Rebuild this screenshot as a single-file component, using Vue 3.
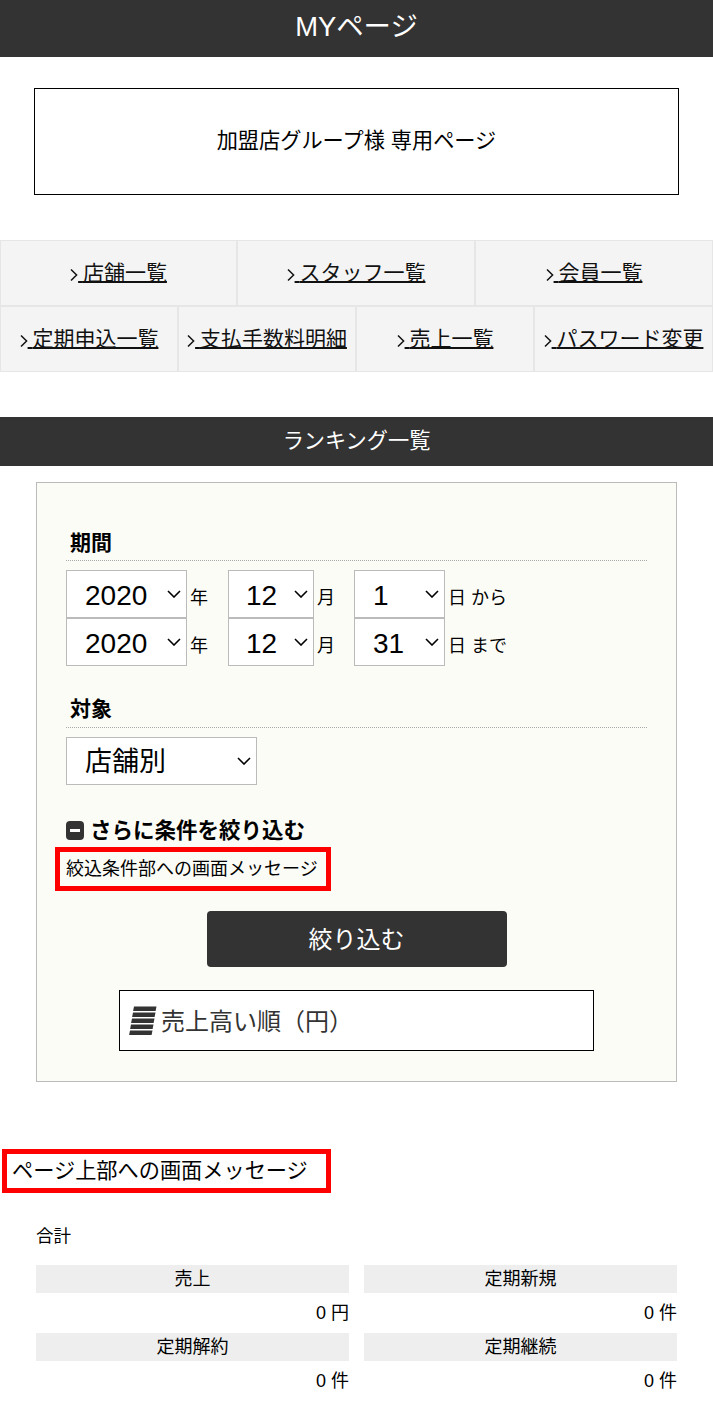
<script setup>
const row1 = ['店舗一覧', 'スタッフ一覧', '会員一覧']
const row2 = ['定期申込一覧', '支払手数料明細', '売上一覧', 'パスワード変更']
const dates = [
  { y: '2020', m: '12', d: '1', end: '日 から' },
  { y: '2020', m: '12', d: '31', end: '日 まで' },
]
const stats = [
  { label: '売上', value: '0 円' },
  { label: '定期新規', value: '0 件' },
  { label: '定期解約', value: '0 件' },
  { label: '定期継続', value: '0 件' },
]
</script>

<template>
  <div class="page">
    <header class="top">MYページ</header>
    <div class="group">加盟店グループ様 専用ページ</div>

    <nav class="nav">
      <div class="nav-row r3">
        <a v-for="n in row1" :key="n" class="nav-item">
          <svg class="gt" width="8" height="14" viewBox="0 0 8 14"><path d="M1 1.5L6.6 7L1 12.5" fill="none" stroke="#111" stroke-width="1.5"/></svg><span class="lnk"><span class="sp">&nbsp;</span>{{ n }}</span>
        </a>
      </div>
      <div class="nav-row r4">
        <a v-for="n in row2" :key="n" class="nav-item">
          <svg class="gt" width="8" height="14" viewBox="0 0 8 14"><path d="M1 1.5L6.6 7L1 12.5" fill="none" stroke="#111" stroke-width="1.5"/></svg><span class="lnk"><span class="sp">&nbsp;</span>{{ n }}</span>
        </a>
      </div>
    </nav>

    <h2 class="section">ランキング一覧</h2>

    <section class="filter">
      <h3 class="flabel">期間</h3>
      <div v-for="(r, i) in dates" :key="i" class="date-row">
        <select class="sel sel-y"><option>{{ r.y }}</option></select>
        <span class="unit u-y">年</span>
        <select class="sel sel-m"><option>{{ r.m }}</option></select>
        <span class="unit u-m">月</span>
        <select class="sel sel-d"><option>{{ r.d }}</option></select>
        <span class="unit">{{ r.end }}</span>
      </div>

      <h3 class="flabel second">対象</h3>
      <select class="sel sel-t"><option>店舗別</option></select>

      <div class="more">
        <span class="minus"><i></i></span><span class="more-text">さらに条件を絞り込む</span>
      </div>
      <div class="msg msg-small">絞込条件部への画面メッセージ</div>

      <button class="go">絞り込む</button>

      <div class="sort">
        <svg class="sort-ico" width="28" height="30" viewBox="0 0 28 30">
          <path d="M5 .5H27.5L26.6 5H4.1ZM4 6.5H26.5L25.6 11H3.1ZM3 12.5H25.5L24.6 17H2.1ZM2 18.5H24.5L23.6 23H1.1ZM1 24.5H23.5L22.6 29H.1Z" fill="#333"/>
        </svg>
        <span class="sort-text">売上高い順（円）</span>
      </div>
    </section>

    <div class="msg msg-large">ページ上部への画面メッセージ</div>

    <section class="totals">
      <div class="totals-title">合計</div>
      <div class="stats">
        <div v-for="s in stats" :key="s.label" class="stat">
          <div class="stat-label">{{ s.label }}</div>
          <div class="stat-value">{{ s.value }}</div>
        </div>
      </div>
    </section>
  </div>
</template>

<style>
html, body { margin: 0; background: #fff; }
</style>

<style scoped>
.page {
  width: 713px;
  height: 1422px;
  overflow: hidden;
  font-family: "Liberation Sans", "Noto Sans CJK JP", sans-serif;
  color: #000;
  text-spacing-trim: space-all;
}
.top {
  height: 57px;
  background: #333;
  color: #fff;
  font-size: 27.4px;
  line-height: 54px;
  text-align: center;
}
.group {
  margin: 31px 34px 0;
  height: 107px;
  box-sizing: border-box;
  border: 1px solid #000;
  font-size: 21.2px;
  line-height: 103px;
  text-align: center;
}
.nav { margin-top: 45px; }
.nav-row { display: grid; grid-template-rows: 66px; height: 66px; }
.r3 { grid-template-columns: 237px 238px 238px; }
.r4 { grid-template-columns: 178px 178px 178px 179px; }
.nav-item {
  box-sizing: border-box;
  height: 66px;
  overflow: hidden;
  border: 1px solid #e6e6e6;
  background: #f4f4f4;
  font-size: 21px;
  line-height: 63px;
  text-align: center;
  white-space: nowrap;
  color: #111;
}
.gt { vertical-align: -2px; }
.lnk { text-decoration: underline; text-decoration-thickness: 2px; }
.sp { letter-spacing: -1px; }
.section {
  margin: 45px 0 0;
  height: 49px;
  background: #333;
  color: #fff;
  font-size: 21.2px;
  font-weight: 400;
  line-height: 48px;
  text-align: center;
}
.filter {
  margin: 16px 36px 0;
  height: 600px;
  box-sizing: border-box;
  border: 1px solid #bbb;
  background: #fcfcf7;
  padding: 0 29px;
}
.flabel {
  margin: 46px 0 0;
  padding: 0 0 4px 4px;
  height: 32px;
  box-sizing: border-box;
  border-bottom: 1px dotted #aaa;
  font-size: 21px;
  line-height: 27px;
  font-weight: 700;
}
.flabel.second { margin-top: 29px; height: 33px; }
.date-row { display: flex; align-items: center; height: 48px; }
.flabel + .date-row { margin-top: 9px; }
.sel {
  appearance: none;
  height: 48px;
  box-sizing: border-box;
  border: 1px solid #bbb;
  border-radius: 0;
  background: #fff url("data:image/svg+xml,%3Csvg xmlns='http://www.w3.org/2000/svg' width='14' height='8'%3E%3Cpath d='M1 1L7 7L13 1' fill='none' stroke='black' stroke-width='1.6'/%3E%3C/svg%3E") no-repeat right 5px center;
  color: #000;
  font-family: inherit;
  font-size: 28px;
  padding: 2px 0 0 18px;
}
.sel-y { width: 121px; }
.sel-m { width: 86px; padding-left: 17px; }
.sel-d { width: 91px; }
.sel-t { display: block; width: 191px; margin-top: 9px; font-size: 27px; }
.unit { font-size: 18px; margin-left: 3px; margin-top: 4px; white-space: nowrap; }
.u-y { width: 38px; }
.u-m { width: 37px; }
.more {
  display: flex;
  align-items: center;
  margin-top: 31px;
  height: 28px;
  font-size: 21.5px;
  font-weight: 700;
}
.more-text { margin-top: -3px; }
.minus {
  display: flex;
  align-items: center;
  justify-content: center;
  width: 18px;
  height: 19px;
  margin-right: 6px;
  background: #333;
  border-radius: 4px;
}
.minus i { display: block; width: 10px; height: 3px; background: #fff; }
.msg {
  box-sizing: border-box;
  border: 5px solid #f00;
  white-space: nowrap;
}
.msg-small {
  width: 276px;
  height: 44px;
  margin: 3px 0 0 -11px;
  padding-left: 6px;
  font-size: 18px;
  line-height: 34px;
}
.go {
  display: block;
  width: 300px;
  height: 56px;
  margin: 20px auto 0;
  border: 0;
  border-radius: 4px;
  background: #333;
  color: #fff;
  font-family: inherit;
  font-size: 24px;
  line-height: 56px;
  padding: 1px 0 0;
}
.sort {
  display: flex;
  align-items: center;
  gap: 4px;
  width: 475px;
  height: 61px;
  box-sizing: border-box;
  margin: 23px 0 0 53px;
  border: 1px solid #000;
  background: #fff;
  padding-left: 9px;
  font-size: 24px;
  color: #333;
}
.sort-ico { flex: none; }
.sort-text { margin-top: -3px; }
.msg-large {
  width: 329px;
  height: 44px;
  margin: 67px 0 0 2px;
  padding-left: 5px;
  font-size: 21.2px;
  line-height: 34px;
}
.totals { margin: 0 36px; }
.totals-title { font-size: 17.5px; margin-top: 31px; line-height: 24px; }
.stats {
  display: grid;
  grid-template-columns: 313px 313px;
  column-gap: 15px;
  margin-top: 17px;
}
.stat { height: 68px; }
.stat-label {
  height: 28px;
  background: #eee;
  font-size: 18px;
  line-height: 29px;
  text-align: center;
}
.stat-value {
  height: 40px;
  font-size: 18px;
  line-height: 40px;
  text-align: right;
}
</style>
